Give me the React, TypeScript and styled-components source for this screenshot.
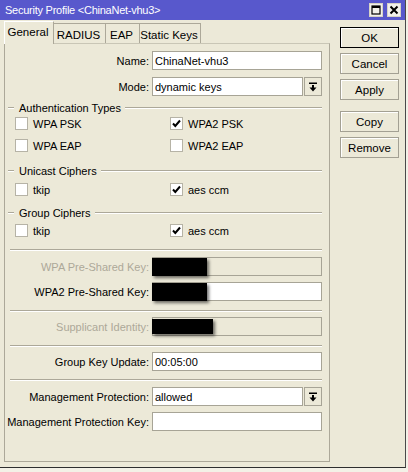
import React from 'react'
import styled, { createGlobalStyle } from 'styled-components'

const GlobalStyle = createGlobalStyle`
  html, body {
    margin: 0;
    padding: 0;
    background: #f3f1e7;
  }
  body {
    font-family: "Liberation Sans", Arial, sans-serif;
    font-size: 11px;
    color: #000;
  }
  * { box-sizing: border-box; }
`

const Window = styled.div`
  width: 406px;
  height: 468px;
  background: #ece9d8;
  border-right: 1px solid #4a4a4a;
  border-bottom: 1px solid #2e2e2e;
  display: flex;
  flex-direction: column;
`

const TitleBar = styled.div`
  height: 20px;
  flex: none;
  background: #5858cc;
  color: #fff;
  display: flex;
  align-items: center;
  justify-content: space-between;
  padding: 0 4px 0 5px;
`

const Title = styled.span`
  font-size: 11px;
  letter-spacing: -0.25px;
`

const TitleButtons = styled.div`
  display: flex;
  gap: 4px;
`

const TitleBtn = styled.div`
  width: 14px;
  height: 14px;
  background: #f2f1ea;
  border: 1px solid #d6d3c6;
  display: grid;
  place-items: center;
`

const Body = styled.div`
  flex: 1;
  display: flex;
  gap: 10px;
  padding: 1px 0 0 4px;
`

const LeftCol = styled.div`
  width: 326px;
  display: flex;
  flex-direction: column;
`

const TabBar = styled.div`
  height: 22px;
  display: flex;
  align-items: flex-end;
`

const Tab = styled.div<{ $w: number; $active?: boolean }>`
  width: ${p => p.$w}px;
  height: ${p => (p.$active ? 23 : 20)}px;
  margin-bottom: ${p => (p.$active ? -1 : 0)}px;
  margin-left: ${p => (p.$active ? 0 : -1)}px;
  position: relative;
  z-index: ${p => (p.$active ? 2 : 1)};
  background: #ece9d8;
  border: 1px solid #aca899;
  border-bottom: none;
  border-top-color: ${p => (p.$active ? '#ffffff' : '#aca899')};
  border-left-color: ${p => (p.$active ? '#ffffff' : '#aca899')};
  text-align: center;
  padding-right: 2px;
  line-height: ${p => (p.$active ? 20 : 20)}px;
  padding-top: ${p => (p.$active ? 0 : 1)}px;
  font-size: 11.5px;
  &:first-child { margin-left: 0; }
`

const Panel = styled.div`
  height: 419px;
  border: 1px solid #aca899;
  border-top-color: #c9c6b6;
  padding: 0 7px 0 0;
  display: flex;
  flex-direction: column;
`

const Row = styled.div<{ $mt: number }>`
  margin-top: ${p => p.$mt}px;
  height: 19px;
  display: flex;
  align-items: center;
`

const Label = styled.div<{ $disabled?: boolean }>`
  width: 144px;
  margin-right: 3px;
  text-align: right;
  white-space: nowrap;
  color: ${p => (p.$disabled ? '#aca899' : '#000')};
`

const Field = styled.div<{ $disabled?: boolean }>`
  flex: 1;
  height: 19px;
  border: 1px solid #a7a496;
  background: ${p => (p.$disabled ? '#ece9d8' : '#ffffff')};
  padding: 0 2px;
  display: flex;
  align-items: center;
  overflow: visible;
  white-space: nowrap;
`

const SelectWrap = styled.div`
  flex: 1;
  display: flex;
  gap: 1px;
`

const DropBtn = styled.div`
  width: 18px;
  height: 19px;
  border: 1px solid #a7a496;
  background: #ece9d8;
  display: grid;
  place-items: center;
`

const Redact = styled.div<{ $w: number; $inset?: boolean }>`
  width: ${p => p.$w}px;
  height: ${p => (p.$inset ? 15 : 18)}px;
  margin-left: -3px;
  background: #000;
  box-shadow: 2px 2px 3px rgba(0, 0, 0, 0.55);
  flex: none;
`

const GroupTitle = styled.div<{ $mt: number }>`
  margin-top: ${p => p.$mt}px;
  height: 13px;
  display: flex;
  align-items: center;
  padding-left: 3px;
`

const Rule = styled.div`
  height: 2px;
  border-top: 1px solid #aca899;
  border-bottom: 1px solid #ffffff;
`

const Dash = styled(Rule)`
  width: 6px;
  margin-right: 5px;
`

const GroupLine = styled(Rule)`
  flex: 1;
  margin-left: 4px;
`

const Separator = styled(Rule)<{ $mt: number }>`
  margin-top: ${p => p.$mt}px;
  margin-left: 5px;
`

const CheckGrid = styled.div<{ $mt: number }>`
  margin-top: ${p => p.$mt}px;
  display: grid;
  grid-template-columns: 155px 1fr;
  row-gap: 9px;
  padding-left: 10px;
`

const CheckItem = styled.div`
  height: 13px;
  display: flex;
  align-items: center;
  gap: 5px;
`

const Box = styled.div`
  width: 13px;
  height: 13px;
  border: 1px solid #b6b3a6;
  background: #fff;
  display: grid;
  place-items: center;
`

const RightCol = styled.div`
  width: 59px;
  padding-top: 6px;
  display: flex;
  flex-direction: column;
  gap: 11px;
`

const BtnGroup = styled.div`
  display: flex;
  flex-direction: column;
  gap: 5px;
`

const Button = styled.div<{ $primary?: boolean }>`
  height: 21px;
  border: 1px solid ${p => (p.$primary ? '#000' : '#a3a093')};
  box-shadow: inset 1px 1px 0 #fff;
  background: #ece9d8;
  display: grid;
  place-items: center;
  font-size: 11.5px;
`

const CheckMark = () => (
  <svg width="9" height="9" viewBox="0 0 9 9">
    <path d="M1 4.5 L3.3 7 L8 1.5" fill="none" stroke="#000" strokeWidth="2" />
  </svg>
)

const DropIcon = () => (
  <svg width="10" height="10" viewBox="0 0 10 10">
    <rect x="1" y="0.5" width="8" height="1.5" fill="#000" />
    <rect x="4" y="3" width="2" height="3" fill="#000" />
    <polygon points="1.5,5.5 8.5,5.5 5,9.5" fill="#000" />
  </svg>
)

const Check = ({ label, checked }: { label: string; checked?: boolean }) => (
  <CheckItem>
    <Box>{checked && <CheckMark />}</Box>
    <span>{label}</span>
  </CheckItem>
)

const Group = ({ title, mt }: { title: string; mt: number }) => (
  <GroupTitle $mt={mt}>
    <Dash />
    <span>{title}</span>
    <GroupLine />
  </GroupTitle>
)

const App = () => (
  <>
    <GlobalStyle />
    <Window>
      <TitleBar>
        <Title>Security Profile &lt;ChinaNet-vhu3&gt;</Title>
        <TitleButtons>
          <TitleBtn>
            <svg width="10" height="10" viewBox="0 0 10 10">
              <rect x="1" y="1" width="8" height="8" fill="none" stroke="#000" strokeWidth="1.2" />
              <rect x="1" y="1" width="8" height="2" fill="#000" />
            </svg>
          </TitleBtn>
          <TitleBtn>
            <svg width="10" height="10" viewBox="0 0 10 10">
              <path d="M1.5 1.5 L8.5 8.5 M8.5 1.5 L1.5 8.5" stroke="#000" strokeWidth="2" />
            </svg>
          </TitleBtn>
        </TitleButtons>
      </TitleBar>
      <Body>
        <LeftCol>
          <TabBar>
            <Tab $w={50} $active>General</Tab>
            <Tab $w={53}>RADIUS</Tab>
            <Tab $w={35}>EAP</Tab>
            <Tab $w={62}>Static Keys</Tab>
          </TabBar>
          <Panel>
            <Row $mt={7}>
              <Label>Name:</Label>
              <Field>ChinaNet-vhu3</Field>
            </Row>
            <Row $mt={7}>
              <Label>Mode:</Label>
              <SelectWrap>
                <Field>dynamic keys</Field>
                <DropBtn><DropIcon /></DropBtn>
              </SelectWrap>
            </Row>

            <Group title="Authentication Types" mt={5} />
            <CheckGrid $mt={3}>
              <Check label="WPA PSK" />
              <Check label="WPA2 PSK" checked />
              <Check label="WPA EAP" />
              <Check label="WPA2 EAP" />
            </CheckGrid>

            <Group title="Unicast Ciphers" mt={12} />
            <CheckGrid $mt={6}>
              <Check label="tkip" />
              <Check label="aes ccm" checked />
            </CheckGrid>

            <Group title="Group Ciphers" mt={10} />
            <CheckGrid $mt={5}>
              <Check label="tkip" />
              <Check label="aes ccm" checked />
            </CheckGrid>

            <Separator $mt={12} />
            <Row $mt={6}>
              <Label $disabled>WPA Pre-Shared Key:</Label>
              <Field $disabled><Redact $w={55} /></Field>
            </Row>
            <Row $mt={6}>
              <Label>WPA2 Pre-Shared Key:</Label>
              <Field><Redact $w={55} /></Field>
            </Row>

            <Separator $mt={9} />
            <Row $mt={5}>
              <Label $disabled>Supplicant Identity:</Label>
              <Field $disabled><Redact $w={61} $inset /></Field>
            </Row>

            <Separator $mt={9} />
            <Row $mt={5}>
              <Label>Group Key Update:</Label>
              <Field>00:05:00</Field>
            </Row>

            <Separator $mt={8} />
            <Row $mt={6}>
              <Label>Management Protection:</Label>
              <SelectWrap>
                <Field>allowed</Field>
                <DropBtn><DropIcon /></DropBtn>
              </SelectWrap>
            </Row>
            <Row $mt={6}>
              <Label>Management Protection Key:</Label>
              <Field />
            </Row>
          </Panel>
        </LeftCol>
        <RightCol>
          <BtnGroup>
            <Button $primary>OK</Button>
            <Button>Cancel</Button>
            <Button>Apply</Button>
          </BtnGroup>
          <BtnGroup>
            <Button>Copy</Button>
            <Button>Remove</Button>
          </BtnGroup>
        </RightCol>
      </Body>
    </Window>
  </>
)

export default App
